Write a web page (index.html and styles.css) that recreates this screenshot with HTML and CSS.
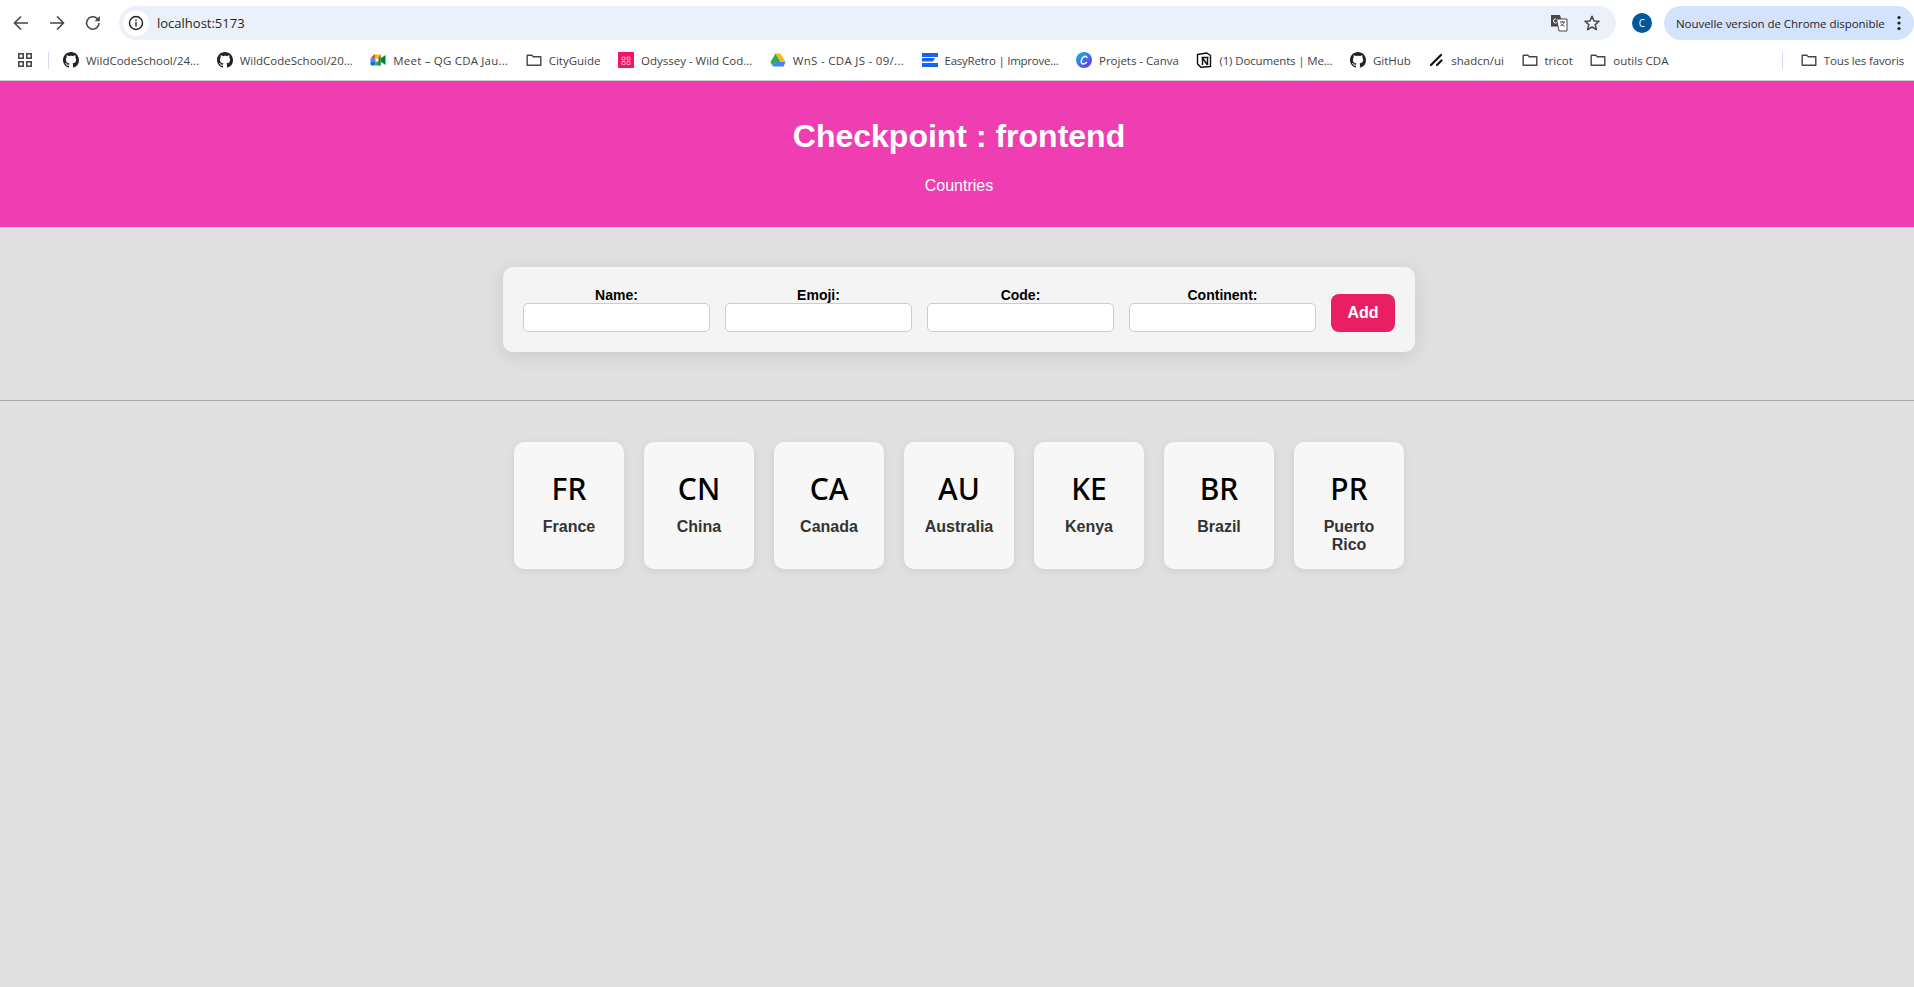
FILE: index.html
```html
<!DOCTYPE html>
<html lang="en">
<head>
  <meta charset="UTF-8" />
  <meta name="viewport" content="width=device-width, initial-scale=1.0" />
  <title>Checkpoint : frontend</title>
  <link rel="stylesheet" href="styles.css">
</head>
<body>
  <svg class="sprites" width="0" height="0">
    <symbol id="gh" viewBox="0 0 16 16"><path fill="#1f2328" d="M8 0C3.58 0 0 3.58 0 8c0 3.54 2.29 6.53 5.47 7.59.4.07.55-.17.55-.38 0-.19-.01-.82-.01-1.49-2.01.37-2.53-.49-2.69-.94-.09-.23-.48-.94-.82-1.13-.28-.15-.68-.52-.01-.53.63-.01 1.08.58 1.23.82.72 1.21 1.87.87 2.33.66.07-.52.28-.87.51-1.07-1.78-.2-3.64-.89-3.64-3.95 0-.87.31-1.59.82-2.15-.08-.2-.36-1.02.08-2.12 0 0 .67-.21 2.2.82.64-.18 1.32-.27 2-.27.68 0 1.36.09 2 .27 1.53-1.04 2.2-.82 2.2-.82.44 1.1.16 1.92.08 2.12.51.56.82 1.27.82 2.15 0 3.07-1.87 3.75-3.65 3.95.29.25.54.73.54 1.48 0 1.07-.01 1.93-.01 2.2 0 .21.15.46.55.38A8.013 8.013 0 0016 8c0-4.42-3.58-8-8-8z"/></symbol>
    <symbol id="folder" viewBox="0 0 16 16"><path fill="none" stroke="#444746" stroke-width="1.4" d="M1.2 3.2h4.6l1.5 1.6h7.5v8.4H1.2z" stroke-linejoin="round"/></symbol>
  </svg>

  <div class="browser">
    <div class="toolbar">
      <div class="nav-icons">
        <svg class="nav-icon" viewBox="0 0 24 24"><path fill="none" stroke="#474747" stroke-width="1.6" d="M19 12H6M12 5.5 5.5 12l6.500 6.500"/></svg>
        <svg class="nav-icon" viewBox="0 0 24 24"><path fill="none" stroke="#474747" stroke-width="1.6" d="M5 12h13M12 5.500l6.500 6.500-6.500 6.500"/></svg>
        <svg class="nav-icon" viewBox="0 0 24 24"><path fill="none" stroke="#474747" stroke-width="1.6" d="M18 12a6.200 6.200 0 1 1-1.800-4.400L18 9.300"/><path fill="#474747" d="M18.800 5v5.200h-5.200z"/></svg>
      </div>
      <div class="address-bar">
        <span class="site-info">
          <svg width="16" height="16" viewBox="0 0 16 16"><circle cx="8" cy="8" r="6.500" fill="none" stroke="#1f1f1f" stroke-width="1.400"/><path fill="#1f1f1f" d="M7.300 7h1.400v4.500H7.300zM7.300 4.500h1.400v1.400H7.300z"/></svg>
        </span>
        <span class="url">localhost:5173</span>
        <svg class="translate-icon" width="18" height="18" viewBox="0 0 18 18"><path fill="#474747" d="M1 1h9l1 3.500v8H1z"/><circle cx="5.500" cy="7" r="2" fill="none" stroke="#fff" stroke-width="1"/><path fill="#fff" stroke="#474747" stroke-width="1" d="M6.500 5h10.500v12H9z"/><path fill="none" stroke="#474747" stroke-width="1" d="M10 8h5M12.500 7v1M14 8c-.5 2-2 3.500-3.500 4M11 9.500c.7 1.200 2 2.300 3.500 2.800"/></svg>
        <svg class="star-icon" width="18" height="18" viewBox="0 0 18 18"><path fill="none" stroke="#474747" stroke-width="1.500" stroke-linejoin="round" d="m9 2.200 2 4.700 5 .400-3.800 3.300 1.200 5L9 13l-4.400 2.600 1.200-5L2 7.300l5-.400z"/></svg>
      </div>
      <span class="avatar">C</span>
      <div class="update-pill">
        <span>Nouvelle version de Chrome disponible</span>
        <svg width="4" height="16" viewBox="0 0 4 16"><circle cx="2" cy="2.500" r="1.600" fill="#1f1f1f"/><circle cx="2" cy="8" r="1.600" fill="#1f1f1f"/><circle cx="2" cy="13.500" r="1.600" fill="#1f1f1f"/></svg>
      </div>
    </div>

    <div class="bookmarks">
      <svg class="apps-icon" width="16" height="16" viewBox="0 0 16 16"><g fill="none" stroke="#474747" stroke-width="1.600"><rect x="1.800" y="1.800" width="4.400" height="4.400"/><rect x="9.800" y="1.800" width="4.400" height="4.400"/><rect x="1.800" y="9.800" width="4.400" height="4.400"/><rect x="9.800" y="9.800" width="4.400" height="4.400"/></g></svg>
      <span class="bar-sep"></span>
      <a class="bookmark bookmark-first"><svg class="bm-icon"><use href="#gh"/></svg>WildCodeSchool/24...</a>
      <a class="bookmark"><svg class="bm-icon"><use href="#gh"/></svg>WildCodeSchool/20...</a>
      <a class="bookmark spaced">
        <svg class="bm-icon" viewBox="0 0 16 16"><path fill="#ea4335" d="M4 2.500H5.500v4H0.500z"/><path fill="#fbbc04" d="M5.500 2.500h5v4h-5z"/><path fill="#4285f4" d="M0.500 6.500h5v3h-5z"/><path fill="#1967d2" d="M0.500 9.500h5v4H2a1.500 1.500 0 0 1-1.500-1.500z"/><path fill="#34a853" d="M5.500 9.500h5v4h-5z"/><path fill="#188038" d="M10.500 2.500v11H8.500V6z"/><path fill="#00832d" d="m10.500 6.500 5-3.400v9.800l-5-3.400z"/></svg>Meet – QG CDA Jau...</a>
      <a class="bookmark"><svg class="bm-icon"><use href="#folder"/></svg>CityGuide</a>
      <a class="bookmark">
        <svg class="bm-icon" viewBox="0 0 16 16"><rect width="16" height="16" fill="#f0146b"/><path fill="none" stroke="#fff" stroke-width=".7" opacity=".8" d="M4 5h3v3H4zM9 5h3v3H9zM4 9.500h3v3H4zM9 9.500h3v3H9z"/></svg>Odyssey - Wild Cod...</a>
      <a class="bookmark spaced-more">
        <svg class="bm-icon" viewBox="0 0 16 16"><path fill="#fbbc04" d="M5.500 1.500h5L15.500 10h-5z"/><path fill="#34a853" d="M5.500 1.500 10.500 10H5.500L3 14.500.5 10z" /><path fill="#4285f4" d="M3 14.500h10.500l2-4.500H5.500z"/></svg>WnS - CDA JS - 09/...</a>
      <a class="bookmark tighter">
        <svg class="bm-icon" viewBox="0 0 16 16"><path fill="#1a62f0" d="M0 1h16v4H0zM0 6h13l-2 3.500H0zM0 11h16v4H0z"/></svg>EasyRetro | Improve...</a>
      <a class="bookmark">
        <svg class="bm-icon" viewBox="0 0 16 16"><defs><linearGradient id="canva" x1="0" y1="0" x2="1" y2="1"><stop offset="0" stop-color="#18c2cf"/><stop offset=".5" stop-color="#3b6ff0"/><stop offset="1" stop-color="#7d2ae8"/></linearGradient></defs><circle cx="8" cy="8" r="8" fill="url(#canva)"/><path fill="none" stroke="#fff" stroke-width="1.500" stroke-linecap="round" d="M11 5.500C10 3.500 6.500 4 5.500 8s1.500 5.500 5 2.500"/></svg>Projets - Canva</a>
      <a class="bookmark tight">
        <svg class="bm-icon" viewBox="0 0 16 16"><path fill="#fff" stroke="#111" stroke-width="1.400" stroke-linejoin="round" d="M1.500 2.500 10.800 1l3.700 2.500v11l-9.700.700-3.300-3.500z"/><path fill="none" stroke="#111" stroke-width="1.400" d="M5.500 5.500h7M6.500 5.500v7.500M11.500 5.500v7.500M6.500 6l5 7"/></svg>(1) Documents | Me...</a>
      <a class="bookmark"><svg class="bm-icon"><use href="#gh"/></svg>GitHub</a>
      <a class="bookmark">
        <svg class="bm-icon" viewBox="0 0 16 16"><path stroke="#111" stroke-width="2.200" stroke-linecap="round" d="M13 3 3 13M13.500 8.500 9 13"/></svg>shadcn/ui</a>
      <a class="bookmark"><svg class="bm-icon"><use href="#folder"/></svg>tricot</a>
      <a class="bookmark"><svg class="bm-icon"><use href="#folder"/></svg>outils CDA</a>
      <span class="bar-sep bar-sep-right"></span>
      <a class="bookmark tight"><svg class="bm-icon"><use href="#folder"/></svg>Tous les favoris</a>
    </div>
  </div>

  <div class="page">
    <header class="header">
      <h1>Checkpoint : frontend</h1>
      <p>Countries</p>
    </header>

    <form class="country-form">
      <label class="field">Name:<input type="text" /></label>
      <label class="field">Emoji:<input type="text" /></label>
      <label class="field">Code:<input type="text" /></label>
      <label class="field">Continent:<input type="text" /></label>
      <button type="button" class="add-button">Add</button>
    </form>

    <hr class="divider" />

    <section class="countries">
      <div class="country-card"><span class="code">FR</span><span class="name">France</span></div>
      <div class="country-card"><span class="code">CN</span><span class="name">China</span></div>
      <div class="country-card"><span class="code">CA</span><span class="name">Canada</span></div>
      <div class="country-card"><span class="code">AU</span><span class="name">Australia</span></div>
      <div class="country-card"><span class="code">KE</span><span class="name">Kenya</span></div>
      <div class="country-card"><span class="code">BR</span><span class="name">Brazil</span></div>
      <div class="country-card"><span class="code">PR</span><span class="name">Puerto Rico</span></div>
    </section>
  </div>
</body>
</html>
```

FILE: styles.css
```css
html, body {
  height: 100%;
}
body {
  margin: 0;
  background: #e0e0e0;
  overflow: hidden;
  font-family: "Liberation Sans", Arial, sans-serif;
}
.sprites {
  display: block;
  height: 0;
}

/* browser chrome */
.browser {
  height: 81px;
  background: #fff;
  font-family: "Open Sans", sans-serif;
  color: #3f3f3f;
  box-sizing: border-box;
  border-bottom: 1px solid #d2d2d2;
}
.toolbar {
  display: flex;
  align-items: center;
  height: 34px;
  padding: 6px 0 0 9px;
}
.nav-icons {
  display: flex;
  gap: 12px;
  margin-right: 14px;
}
.nav-icon {
  width: 24px;
  height: 24px;
}
.address-bar {
  flex: 1;
  display: flex;
  align-items: center;
  height: 34px;
  background: #ecf1f9;
  border-radius: 17px;
  padding-left: 4px;
  padding-right: 15px;
}
.site-info {
  display: flex;
  align-items: center;
  justify-content: center;
  width: 26px;
  height: 26px;
  border-radius: 50%;
  background: #fff;
}
.url {
  flex: 1;
  margin-left: 8px;
  font-size: 13px;
  color: #1f1f1f;
}
.translate-icon {
  margin-right: 15px;
}
.avatar {
  display: flex;
  align-items: center;
  justify-content: center;
  width: 20px;
  height: 20px;
  margin: 0 12px 0 16px;
  border-radius: 50%;
  background: #01579b;
  color: #fff;
  font-size: 10px;
}
.update-pill {
  display: flex;
  align-items: center;
  gap: 12px;
  width: 238px;
  height: 34px;
  padding-left: 12px;
  border-radius: 17px;
  background: #d3e3fd;
  font-size: 11.5px;
  letter-spacing: -0.05px;
  color: #1f1f1f;
  white-space: nowrap;
}

.bookmarks {
  display: flex;
  align-items: center;
  gap: 17.5px;
  height: 40px;
  padding: 0 10px 0 17px;
  font-size: 11.5px;
  white-space: nowrap;
}
.apps-icon {
  flex: none;
}
.bar-sep {
  width: 1px;
  height: 17px;
  margin-left: -3px;
  background: #cfdcf3;
}
.bar-sep-right {
  margin-left: auto;
}
.bookmark {
  display: flex;
  align-items: center;
  gap: 7px;
}
.bookmark-first {
  margin-left: -3px;
}
.spaced {
  letter-spacing: 0.2px;
}
.spaced-more {
  letter-spacing: 0.3px;
}
.tight {
  letter-spacing: -0.15px;
}
.tighter {
  letter-spacing: -0.25px;
}
.bm-icon {
  flex: none;
  width: 16px;
  height: 16px;
}

/* page */
.page {
  width: 1918px;
}
.header {
  padding: 16px;
  background: #ef3eb2;
  color: #fff;
  text-align: center;
}
.header h1 {
  font-size: 32px;
}
.header p {
  font-size: 16px;
}

.country-form {
  display: flex;
  align-items: flex-end;
  gap: 15px;
  width: fit-content;
  margin: 40px auto 48px;
  padding: 20px;
  background: #f4f4f4;
  border-radius: 10px;
  box-shadow: 0 4px 20px rgba(0, 0, 0, 0.1);
}
.field {
  display: flex;
  flex-direction: column;
  align-items: center;
  font-size: 14px;
  font-weight: bold;
  color: #000;
}
.field input {
  width: 187px;
  height: 29px;
  box-sizing: border-box;
  padding: 5px;
  border: 1px solid #ccc;
  border-radius: 5px;
  background: #fff;
}
.add-button {
  width: 64px;
  height: 38px;
  border: none;
  border-radius: 8px;
  background: #e91e63;
  color: #fff;
  font-family: inherit;
  font-size: 16px;
  font-weight: bold;
}

.divider {
  height: 1px;
  margin: 0 0 41px;
  border: none;
  border-top: 1px solid #a9a9a9;
  box-sizing: border-box;
}

.countries {
  display: flex;
  justify-content: center;
  gap: 20px;
}
.country-card {
  display: flex;
  flex-direction: column;
  align-items: center;
  box-sizing: border-box;
  width: 110px;
  min-height: 127px;
  padding: 19px 15px 15px;
  background: #f7f7f7;
  border-radius: 10px;
  box-shadow: 0 2px 8px rgba(0, 0, 0, 0.08);
  text-align: center;
}
.code {
  margin-bottom: 1px;
  font-family: "Noto Sans", sans-serif;
  font-size: 30px;
  font-weight: 500;
  line-height: 56px;
  color: #000;
}
.name {
  font-size: 16px;
  line-height: 18px;
  font-weight: bold;
  color: #333;
}
```
